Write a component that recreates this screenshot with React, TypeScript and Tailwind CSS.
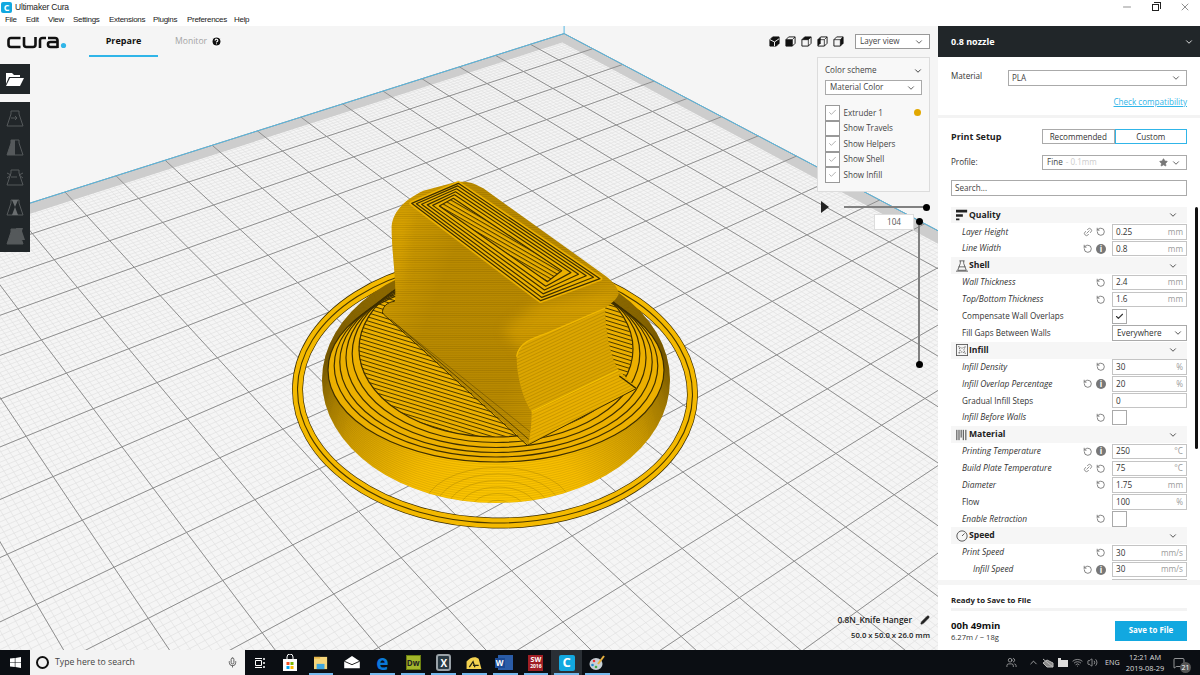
import React from "react";
import { ChevronDown, RotateCcw, Check, Star, Pencil, X, Minus, Mic, Link2, ChevronUp, Volume2, Wifi, MessageSquare, Users, HelpCircle } from "lucide-react";

const H = (a: number, b: number) => {
  const w = 1 - 0.022387 * a - 0.016922 * b;
  return [(15.37 * a - 42.69 * b + 564.1) / w, (14.01 * a + 9.951 * b + 33.6) / w];
};
const seg = (a0: number, b0: number, a1: number, b1: number) => {
  const p = H(a0, b0), q = H(a1, b1);
  return `M${p[0].toFixed(1)} ${p[1].toFixed(1)}L${q[0].toFixed(1)} ${q[1].toFixed(1)}`;
};
const bMax = (a: number) => (0.88 - 0.022387 * a) / 0.016922;
const aMax = (b: number) => (0.88 - 0.016922 * b) / 0.022387;

function gridPath(step: number) {
  let d = "";
  for (let i = 0; i * step < 38; i++) d += seg(i * step, 0, i * step, bMax(i * step));
  for (let i = 0; i * step < 50; i++) d += seg(0, i * step, aMax(i * step), i * step);
  return d;
}
const poly = (pts: number[][]) => pts.map((p) => p.map((n) => n.toFixed(1)).join(",")).join(" ");

const outer = [[505, 40], [930, 326], [752, 392], [365, 100]];
const inner = [[490, 85], [815, 302], [772, 335], [448, 108]];
const lerpRect = (t: number) => outer.map((p, i) => [p[0] + (inner[i][0] - p[0]) * t, p[1] + (inner[i][1] - p[1]) * t]);

const BODY =
  "M305 175C305 130 340 90 400 62L490 38C530 30 550 38 580 55L950 320C975 340 990 365 985 375C975 395 955 405 945 415C945 480 960 560 985 600L1040 655L715 825L280 430C275 410 295 395 315 395C320 330 305 250 305 175Z";
const GRIP = "M680 560C685 520 725 505 770 490L945 415C945 480 960 560 985 600L725 725C700 690 680 620 680 560Z";
const STRIP = "M725 725L985 600L1040 655L715 825C722 790 725 760 725 725Z";

function Scene() {
  const band = [H(0, 0), H(38, 0), H(38, 0.35), H(0.35, 0.35), H(0.35, 50), H(0, 50)];
  const wallEll = Array.from({ length: 18 }, (_, i) => i / 17);
  const rings = [0, 0.2, 0.38, 0.58, 0.78, 1];
  const ell = (t: number) => ({ cx: 496, cy: 370 - 21 * t, rx: 168 - 31 * t, ry: 92 - 4 * t });
  return (
    <svg className="absolute inset-0" width="938" height="624" viewBox="0 26 938 624">
      <defs>
        <radialGradient id="wall" gradientUnits="userSpaceOnUse" cx="496" cy="530" r="240">
          <stop offset="0" stopColor="#ffcb00" />
          <stop offset="0.4" stopColor="#f7bd00" />
          <stop offset="0.72" stopColor="#cf9c00" />
          <stop offset="1" stopColor="#936e00" />
        </radialGradient>
        <linearGradient id="body" x1="0" x2="1" y1="0.1" y2="0.5">
          <stop offset="0" stopColor="#d8a200" />
          <stop offset="0.3" stopColor="#b98a00" />
          <stop offset="0.65" stopColor="#b88900" />
          <stop offset="1" stopColor="#d09c00" />
        </linearGradient>
        <filter id="soft" x="-30%" y="-30%" width="160%" height="160%">
          <feGaussianBlur stdDeviation="18" />
        </filter>
        <pattern id="infill" patternUnits="userSpaceOnUse" width="40" height="3.9" patternTransform="rotate(17)">
          <rect width="40" height="3.9" fill="#ecb000" />
          <rect width="40" height="1" fill="#4a3900" />
        </pattern>
        <pattern id="infillK" patternUnits="userSpaceOnUse" width="60" height="11" patternTransform="rotate(30)">
          <rect width="60" height="11" fill="#ecb000" />
          <rect width="60" height="3.2" fill="#4a3900" />
        </pattern>
        <pattern id="lines" patternUnits="userSpaceOnUse" width="6" height="6.6">
          <rect width="6" height="1.8" fill="#000" opacity="0.12" />
        </pattern>
        <pattern id="linesB" patternUnits="userSpaceOnUse" width="6" height="9" patternTransform="rotate(-25)">
          <rect width="6" height="2" fill="#5a4400" opacity="0.32" />
        </pattern>
        <clipPath id="baseClip">
          <ellipse cx="496" cy="380" rx="174" ry="123" />
        </clipPath>
        <clipPath id="bodyClip">
          <path d={BODY} />
        </clipPath>
      </defs>
      <path d={gridPath(0.1)} stroke="#e1e1e1" strokeWidth="0.7" fill="none" />
      <polygon points={poly(band)} fill="#cdcdcd" />
      <path d={gridPath(1)} stroke="#8f8f8f" strokeWidth="1" fill="none" />
      <path d={seg(0, 0, 38, 0) + seg(0, 0, 0, 50) + "M564.1 26L564.1 33.6"} stroke="#56b8e2" strokeWidth="1" fill="none" />

      {/* brim */}
      <g fill="none" transform="rotate(1.2 495 392)">
        <ellipse cx="495" cy="392" rx="197.5" ry="131" stroke="#3e2f00" strokeWidth="11" />
        <ellipse cx="495" cy="392" rx="197.5" ry="131" stroke="#f4b900" strokeWidth="9.6" />
        <ellipse cx="495" cy="392" rx="197.5" ry="131" stroke="#4a3900" strokeWidth="1.1" />
      </g>

      {/* base */}
      <ellipse cx="496" cy="380" rx="174" ry="123" fill="url(#wall)" />
      <g clipPath="url(#baseClip)" fill="none" stroke="#4a3900" strokeOpacity="0.2" strokeWidth="0.6">
        {wallEll.map((t) => (
          <ellipse key={t} cx="496" cy={370 + 10 * t} rx={168 + 6 * t} ry={92 + 31 * t} />
        ))}
        {[14, 26, 38, 50, 62, 74].map((r) => (
          <ellipse key={r} cx="498" cy="508" rx={r} ry={r * 0.55} strokeOpacity="0.3" />
        ))}
      </g>
      <ellipse cx="496" cy="370" rx="168" ry="92" fill="#ecb000" />
      <ellipse cx="495.5" cy="349" rx="137" ry="88" fill="url(#infill)" />
      <g fill="none" stroke="#3e2f00" strokeWidth="1.2">
        {rings.map((t) => {
          const e = ell(t);
          return <ellipse key={t} cx={e.cx} cy={e.cy} rx={e.rx} ry={e.ry} />;
        })}
      </g>

      {/* knob */}
      <g transform="translate(290 170) scale(0.33333)">
        <path d={BODY} fill="url(#body)" />
        <g clipPath="url(#bodyClip)">
          <path d="M740 400L985 370L945 430L770 500L690 540L640 480Z" fill="#e2a900" opacity="0.55" filter="url(#soft)" />
          <path d="M300 170L360 110L340 300L310 390Z" fill="#e2aa00" opacity="0.5" filter="url(#soft)" />
        </g>
        <path d={BODY} fill="url(#lines)" />
        <polygon points={poly(outer)} fill="#ecb100" stroke="#ecb100" strokeWidth="14" strokeLinejoin="round" />
        <polygon points={poly(inner)} fill="url(#infillK)" />
        <g fill="none" stroke="#3e2f00" strokeWidth="3.6" strokeLinejoin="round">
          {[0, 0.17, 0.36, 0.56, 0.76, 1].map((t) => (
            <polygon key={t} points={poly(lerpRect(t))} />
          ))}
        </g>
        <path d={GRIP} fill="#dca600" />
        <path d={GRIP} fill="url(#linesB)" />
        <path d={STRIP} fill="#e9b000" />
        <path d={STRIP} fill="url(#linesB)" />
        <path d="M725 725L985 600" stroke="#f7c400" strokeWidth="3" fill="none" />
        <path d="M680 560C685 520 725 505 770 490L945 415" stroke="#f0b800" strokeWidth="4" fill="none" />
        <path d="M988 618L1038 655" stroke="#2c2200" strokeWidth="3.5" fill="none" />
        <g fill="none" stroke="#3e2f00" strokeWidth="3">
          <path d="M278 432C274 412 292 396 314 394" />
          <path d="M280 432L712 826L1040 655" />
          <path d="M302 448L716 808" strokeOpacity="0.75" />
          <path d="M325 468L720 785" strokeOpacity="0.4" />
        </g>
      </g>
    </svg>
  );
}

const Cube = ({ kind }: { kind: number }) => (
  <svg width="11" height="11" viewBox="0 0 12 12" className="shrink-0">
    <path d="M1 4L4 1H11V8L8 11H1Z" fill={kind === 0 ? "#111" : "none"} stroke="#111" strokeWidth="1" />
    {kind === 1 && <rect x="1" y="4" width="7" height="7" fill="#111" />}
    {kind === 2 && <path d="M1 4L4 1H11L8 4Z" fill="#111" />}
    {kind === 3 && <path d="M1 4L4 1V8L1 11Z" fill="#111" />}
    {kind === 4 && <path d="M8 4L11 1V8L8 11Z" fill="#111" />}
    {kind !== 0 && <path d="M1 4H8V11M8 4L11 1" fill="none" stroke="#111" strokeWidth="0.8" />}
    {kind === 0 && <path d="M1 4L6 6.5L11 3M6 6.5V11" stroke="#fff" strokeWidth="1" fill="none" />}
  </svg>
);

const Flask = ({ variant }: { variant: number }) => (
  <svg width="22" height="22" viewBox="0 0 22 22">
    {variant === 4 && <path d="M12 3H19L18 6L21 15H14Z" fill="#55595b" />}
    <path d="M7 4H15V7L19 19H3L7 7Z" fill={variant === 4 ? "#55595b" : "none"} stroke="#55595b" strokeWidth="1" />
    {variant === 1 && <path d="M7 4H11V19H3L7 7Z" fill="#55595b" />}
    {variant === 0 && <path d="M7 11H13M11 9L13 11L11 13" stroke="#55595b" fill="none" />}
    {variant === 2 && <path d="M3 7L7 9L3 12M19 7L15 9L19 12M7 11H13" stroke="#55595b" fill="none" />}
    {variant === 3 && <path d="M8 4L11 11L8 19H14L11 11L14 4Z" fill="#6a6e70" />}
  </svg>
);

const Revert = () => <RotateCcw size={9.5} strokeWidth={1.8} className="text-[#555]" />;
const InfoDot = () => (
  <span className="flex h-[10px] w-[10px] items-center justify-center rounded-full bg-[#777] text-[8px] font-bold leading-none text-white">i</span>
);
const LinkI = () => <Link2 size={10} strokeWidth={1.6} className="-rotate-45 text-[#666]" />;

type R =
  | { cat: string; icon: number }
  | { label: string; it?: boolean; ind?: boolean; i1?: string; i2?: string; val?: string; unit?: string; chk?: boolean; sel?: string; empty?: boolean };

const rows: R[] = [
  { cat: "Quality", icon: 0 },
  { label: "Layer Height", it: true, i1: "l", i2: "r", val: "0.25", unit: "mm" },
  { label: "Line Width", it: true, i1: "r", i2: "i", val: "0.8", unit: "mm" },
  { cat: "Shell", icon: 1 },
  { label: "Wall Thickness", it: true, i2: "r", val: "2.4", unit: "mm" },
  { label: "Top/Bottom Thickness", it: true, i2: "r", val: "1.6", unit: "mm" },
  { label: "Compensate Wall Overlaps", chk: true },
  { label: "Fill Gaps Between Walls", sel: "Everywhere" },
  { cat: "Infill", icon: 2 },
  { label: "Infill Density", it: true, i2: "r", val: "30", unit: "%" },
  { label: "Infill Overlap Percentage", it: true, i1: "r", i2: "i", val: "20", unit: "%" },
  { label: "Gradual Infill Steps", val: "0" },
  { label: "Infill Before Walls", it: true, i2: "r", empty: true },
  { cat: "Material", icon: 3 },
  { label: "Printing Temperature", it: true, i1: "r", i2: "i", val: "250", unit: "°C" },
  { label: "Build Plate Temperature", it: true, i1: "l", i2: "r", val: "75", unit: "°C" },
  { label: "Diameter", it: true, i2: "r", val: "1.75", unit: "mm" },
  { label: "Flow", val: "100", unit: "%" },
  { label: "Enable Retraction", it: true, i2: "r", empty: true },
  { cat: "Speed", icon: 4 },
  { label: "Print Speed", it: true, i2: "r", val: "30", unit: "mm/s" },
  { label: "Infill Speed", it: true, ind: true, i1: "r", i2: "i", val: "30", unit: "mm/s" },
  { label: "", val: "" },
];

const Ic = ({ k }: { k?: string }) => (
  <span className="flex w-[13px] items-center justify-center">
    {k === "r" && <Revert />}
    {k === "i" && <InfoDot />}
    {k === "l" && <LinkI />}
  </span>
);

const CatIcon = ({ i }: { i: number }) => (
  <svg width="12" height="12" viewBox="0 0 14 14" className="shrink-0">
    {i === 0 && <path d="M0 1H13V4H0ZM0 6H8V9H0ZM0 11H4V13H0Z" fill="#222" />}
    {i === 1 && <path d="M4 1H10M5 1V4L2 12H12L9 4V1M0 13H14M3 8H11" stroke="#444" fill="none" strokeWidth="0.9" />}
    {i === 2 && (
      <g>
        <rect x="0.5" y="0.5" width="13" height="13" fill="none" stroke="#555" />
        <path d="M3 3L7 5L11 3L9 7L11 11L7 9L3 11L5 7Z" fill="none" stroke="#555" strokeDasharray="1.5 1" />
      </g>
    )}
    {i === 3 && <path d="M1 1V13M3.5 1V13M6 1V10M8.5 1V13M11.5 1V13" stroke="#333" strokeWidth="1.1" fill="none" />}
    {i === 4 && (
      <g>
        <circle cx="7" cy="7" r="6" fill="none" stroke="#444" />
        <path d="M7 7L10 4" stroke="#444" />
      </g>
    )}
  </svg>
);

function SettingRow({ r }: { r: R }) {
  if ("cat" in r) {
    return (
      <div className="flex h-[16.9px] items-center bg-[#f6f6f6] pl-[3px] pr-[9px]">
        <span className="flex w-[15px] justify-center"><CatIcon i={r.icon} /></span>
        <span className="flex-1 text-[8.6px] font-bold text-[#222]">{r.cat}</span>
        <ChevronDown size={10} strokeWidth={2} className="text-[#333]" />
      </div>
    );
  }
  return (
    <div className="flex h-[16.9px] items-center">
      <span className={`flex-1 whitespace-nowrap text-[#333] ${r.it ? "text-[8.4px] italic" : "text-[8.1px]"} ${r.ind ? "pl-[22px]" : "pl-[11px]"}`}>{r.label}</span>
      <Ic k={r.i1} />
      <Ic k={r.i2} />
      <span className="ml-[4.5px] w-[75px]">
        {r.chk || r.empty ? (
          <span className="flex h-[15.5px] w-[15px] items-center justify-center border border-[#aaa] bg-white">
            {r.chk && <Check size={9} strokeWidth={3} className="text-[#333]" />}
          </span>
        ) : r.sel ? (
          <span className="flex h-[15.5px] items-center justify-between border border-[#aaa] bg-white pl-[4px] pr-[3px] text-[8.2px] text-[#333]">
            {r.sel}
            <ChevronDown size={10} strokeWidth={2} />
          </span>
        ) : (
          <span className="flex h-[15.5px] items-center justify-between border border-[#c4c4c4] bg-white pl-[3px] pr-[3px] text-[8.2px] text-[#333]">
            {r.val}
            <span className="text-[#9a9a9a]">{r.unit}</span>
          </span>
        )}
      </span>
    </div>
  );
}

const Boxed = ({ label, chk, dot }: { label: string; chk: boolean; dot?: boolean }) => (
  <div className="flex h-[15.5px] items-center">
    <span className="flex h-[15.5px] w-[15px] items-center justify-center border border-[#999] bg-white">
      {chk && <Check size={9} strokeWidth={2} className="text-[#999]" />}
    </span>
    <span className="ml-[3.5px] flex-1 text-[8.1px] text-[#444]">{label}</span>
    {dot && <span className="mr-[1px] h-[7px] w-[7px] rounded-full bg-[#e2a800]" />}
  </div>
);

function Tb({ n, on }: { n: number; on: boolean }) {
  return (
    <div className={`relative flex h-full w-[30.7px] items-center justify-center ${n === 9 ? "bg-[#2a2f35]" : ""}`}>
      {n === 0 && (
        <svg width="16" height="18" viewBox="0 0 16 18">
          <path d="M1 5H15V17H1Z" fill="#fff" />
          <path d="M5 5V3A3 3 0 0 1 11 3V5" stroke="#fff" fill="none" />
          <rect x="4.5" y="8" width="3" height="3" fill="#f25022" />
          <rect x="8.5" y="8" width="3" height="3" fill="#7fba00" />
          <rect x="4.5" y="12" width="3" height="3" fill="#00a4ef" />
          <rect x="8.5" y="12" width="3" height="3" fill="#ffb900" />
        </svg>
      )}
      {n === 1 && (
        <svg width="14" height="14" viewBox="0 0 16 16">
          <rect y="1" width="15" height="14" fill="#f6d67a" />
          <rect y="1" width="7" height="2" fill="#e8b64a" />
          <rect x="3" y="9" width="9" height="6" fill="#3ea7e0" />
        </svg>
      )}
      {n === 2 && (
        <svg width="16" height="13" viewBox="0 0 18 15">
          <path d="M0 6L9 0L18 6V14H0Z" fill="#fff" />
          <path d="M0 6L9 10L18 6" stroke="#000" fill="none" />
        </svg>
      )}
      {n === 3 && <span className="text-[21px] font-bold leading-none text-[#0a78d7]">e</span>}
      {n === 4 && <span className="flex h-[15px] w-[15px] items-center justify-center border border-[#6b7f10] bg-[#a4b62b] text-[8px] font-bold text-[#222]">Dw</span>}
      {n === 5 && (
        <span className="flex h-[17px] w-[15px] items-center justify-center rounded-[3px] border-2 border-[#9aa2a8] bg-[#2a3a44] text-[10px] font-bold leading-none text-white">X</span>
      )}
      {n === 6 && (
        <svg width="16" height="14" viewBox="0 0 16 15">
          <path d="M0 6C4 1 10 0 13 3L16 14H0Z" fill="#f3d250" />
          <path d="M3 12L7 6L9 12M7 10H13" stroke="#221" strokeWidth="1.3" fill="none" />
        </svg>
      )}
      {n === 7 && (
        <span className="relative flex h-[15px] w-[15px] items-center justify-end bg-[#2a5ca8]">
          <span className="absolute -left-[3px] flex h-[10px] w-[10px] items-center justify-center bg-[#1b4a94] text-[8px] font-bold leading-none text-white">W</span>
        </span>
      )}
      {n === 8 && (
        <span className="flex h-[16px] w-[15px] flex-col items-center justify-center bg-[#a01f25] text-[7px] font-bold leading-[7px] text-white">
          SW<span className="text-[5px] leading-[6px]">2016</span>
        </span>
      )}
      {n === 9 && (
        <span className="flex h-[16px] w-[16px] items-center justify-center rounded-[2px] bg-[#12a8e0] text-[13px] font-bold leading-none text-white">C</span>
      )}
      {n === 10 && (
        <svg width="16" height="16" viewBox="0 0 16 16">
          <ellipse cx="7" cy="9" rx="6.5" ry="6" fill="#c7cfd6" />
          <circle cx="5" cy="6" r="1.3" fill="#e33" />
          <circle cx="3.5" cy="10" r="1.3" fill="#28c" />
          <circle cx="7" cy="12" r="1.3" fill="#4a4" />
          <path d="M9 9L15 1" stroke="#e6b040" strokeWidth="2" />
        </svg>
      )}
      {on && <span className="absolute bottom-0 left-[3px] right-[3px] h-[2px] bg-[#76b9ed]" />}
    </div>
  );
}

export default function App() {
  return (
    <div className="flex h-[675px] w-[1200px] flex-col overflow-hidden bg-white font-['Open_Sans','Noto_Sans',sans-serif]">
      {/* title */}
      <div className="flex h-[14px] items-center">
        <span className="ml-[1px] flex h-[11px] w-[11px] items-center justify-center rounded-[2px] bg-[#12a8e0] text-[9px] font-bold leading-none text-white">C</span>
        <span className="ml-[3px] flex-1 font-['Liberation_Sans',sans-serif] text-[8.5px] leading-none tracking-[-0.2px] text-[#222]">Ultimaker Cura</span>
        <span className="flex w-[29px] justify-center"><Minus size={12} strokeWidth={1} className="text-[#222]" /></span>
        <span className="flex w-[29px] justify-center">
          <span className="relative block h-[7px] w-[7px] border border-[#222]">
            <span className="absolute -right-[3px] -top-[3px] h-[7px] w-[7px] border-r border-t border-[#222]" />
          </span>
        </span>
        <span className="mr-[1px] flex w-[29px] justify-center"><X size={12} strokeWidth={1} className="text-[#222]" /></span>
      </div>
      {/* menu */}
      <div className="flex h-[12px] items-center pl-[5px] font-['Liberation_Sans',sans-serif] text-[8px] leading-none tracking-[-0.3px] text-[#222]">
        <span className="w-[21px]">File</span>
        <span className="w-[22px]">Edit</span>
        <span className="w-[25px]">View</span>
        <span className="w-[36px]">Settings</span>
        <span className="w-[44px]">Extensions</span>
        <span className="w-[34px]">Plugins</span>
        <span className="w-[47px]">Preferences</span>
        <span>Help</span>
      </div>
      {/* main */}
      <div className="flex h-[624px]">
        <div className="relative w-[938px] overflow-hidden bg-[#f5f5f5]">
          <Scene />
          {/* top bar */}
          <div className="relative flex h-[31px] items-start">
            <svg width="60" height="13" viewBox="0 0 60 13" className="ml-[7px] mt-[9.5px]">
              <g fill="none" stroke="#111" strokeWidth="2.6">
                <path d="M13.5 2H4Q1.5 2 1.5 4.5V8.5Q1.5 11 4 11H13.5" />
                <path d="M17 1V8.5Q17 11 19.5 11H26Q28.5 11 28.5 8.5V1" />
                <path d="M33 12V4.5Q33 2 35.5 2H39" />
                <path d="M41 2H48Q50.5 2 50.5 4.5V12M50.5 11H43.5Q41 11 41 8.5V8Q41 6 43.5 6H50.5" />
              </g>
              <circle cx="56.5" cy="9.5" r="2.6" fill="#30b5e8" />
            </svg>
            <div className="ml-[22px] flex h-[31px] w-[69px] items-center justify-center border-b-2 border-[#30b5e8] text-[9px] font-bold text-[#111]">Prepare</div>
            <div className="ml-[17px] flex h-[31px] items-center gap-[4px] text-[8.6px] text-[#a4a4a4]">
              Monitor
              <HelpCircle size={11} strokeWidth={2.5} fill="#111" className="text-white" />
            </div>
            <div className="ml-auto mr-[8px] mt-[8px] flex items-center">
              <div className="mr-[11px] flex gap-[5px]">
                {[0, 1, 2, 3, 4].map((k) => <Cube key={k} kind={k} />)}
              </div>
              <div className="flex h-[15px] w-[75px] items-center justify-between border border-[#999] bg-white pl-[4px] pr-[5px] text-[8.1px] text-[#444]">
                Layer view
                <ChevronDown size={10} strokeWidth={2} />
              </div>
            </div>
          </div>
          {/* left toolbar */}
          <div className="relative mt-[7px] flex w-[30px] flex-col">
            <div className="flex h-[30px] items-center justify-center bg-[#212629]">
              <svg width="18" height="14" viewBox="0 0 18 14">
                <path d="M0 1H6L8 3H14V5H3L0 12Z" fill="#fff" />
                <path d="M4 6H18L14 14H0Z" fill="#fff" />
              </svg>
            </div>
            <div className="mt-[8px] flex h-[150px] flex-col items-center justify-around bg-[#212629] py-[1px]">
              {[0, 1, 2, 3, 4].map((k) => <Flask key={k} variant={k} />)}
            </div>
          </div>
          {/* layer panel */}
          <div className="absolute left-[817px] top-[31px] h-[135px] w-[113px] border border-[#dcdcdc] bg-[#f8f8f8] px-[7px] pt-[7px]">
            <div className="flex h-[11px] items-center justify-between text-[8.1px] text-[#444]">
              Color scheme
              <ChevronDown size={10} strokeWidth={2} className="-mr-[1px] text-[#222]" />
            </div>
            <div className="mt-[4px] flex h-[15px] items-center justify-between border border-[#aaa] bg-white pl-[4px] pr-[5px] text-[8.1px] text-[#444]">
              Material Color
              <ChevronDown size={10} strokeWidth={2} />
            </div>
            <div className="mt-[10px]">
              <Boxed label="Extruder 1" chk dot />
              <Boxed label="Show Travels" chk={false} />
              <Boxed label="Show Helpers" chk />
              <Boxed label="Show Shell" chk />
              <Boxed label="Show Infill" chk />
            </div>
          </div>
          {/* slider */}
          <div className="absolute left-[821px] top-[175px] h-0 w-0 border-y-[6px] border-l-[8px] border-y-transparent border-l-[#222]" />
          <div className="absolute left-[844px] top-[180px] h-[2px] w-[82px] bg-[#808080]" />
          <div className="absolute left-[922.5px] top-[177.5px] h-[7px] w-[7px] rounded-full bg-black" />
          <div className="absolute left-[918px] top-[196px] h-[142px] w-[2px] bg-[#808080]" />
          <div className="absolute left-[915.5px] top-[192px] h-[7px] w-[7px] rounded-full bg-black" />
          <div className="absolute left-[915.5px] top-[334.5px] h-[7px] w-[7px] rounded-full bg-black" />
          <div className="absolute left-[874px] top-[188px] flex h-[16px] w-[40px] items-center justify-center border border-[#ddd] bg-white text-[8.2px] text-[#555]">104</div>
          {/* object info */}
          <div className="absolute bottom-[8px] right-[8px] flex flex-col items-end">
            <div className="flex items-center font-semibold text-[#222]">
              <span className="text-[8.4px]">0.8N_Knife Hanger</span>
              <Pencil size={10} fill="#222" strokeWidth={1.5} className="ml-[8px]" />
            </div>
            <div className="mt-[4px] text-[7.7px] font-semibold text-[#222]">50.0 x 50.0 x 26.0 mm</div>
          </div>
        </div>

        {/* right panel */}
        <div className="relative flex w-[262px] flex-col bg-white">
          <div className="flex h-[31px] items-center justify-between bg-[#212629] pl-[13px] pr-[6px] text-[9px] font-bold text-white">
            0.8 nozzle
            <ChevronDown size={10} strokeWidth={2} />
          </div>
          <div className="h-[58px] pl-[13px] pr-[13px] pt-[13px]">
            <div className="flex h-[15.5px] items-center">
              <span className="-mt-[3px] w-[57px] text-[8.1px] text-[#333]">Material</span>
              <div className="flex h-[15.5px] flex-1 items-center justify-between border border-[#aaa] pl-[3px] pr-[5px] text-[8.1px] text-[#444]">
                PLA
                <ChevronDown size={10} strokeWidth={2} />
              </div>
            </div>
            <div className="mt-[10px] text-right text-[8.1px] text-[#30b5e8] underline">Check compatibility</div>
          </div>
          <div className="h-[3px] bg-[#f3f3f3]" />
          <div className="pl-[13px] pr-[13px] pt-[11.5px]">
            <div className="flex h-[14.5px] items-center">
              <span className="w-[91px] text-[9px] font-bold text-[#222]">Print Setup</span>
              <div className="flex h-[15px] flex-1 text-[8.1px] text-[#333]">
                <span className="flex flex-1 items-center justify-center border border-[#aaa]">Recommended</span>
                <span className="flex flex-1 items-center justify-center border border-[#30b5e8]">Custom</span>
              </div>
            </div>
            <div className="mt-[11px] flex h-[15px] items-center">
              <span className="w-[91px] text-[8.1px] text-[#333]">Profile:</span>
              <div className="flex h-[15px] flex-1 items-center border border-[#aaa] pl-[4px] pr-[5px] text-[8.1px] text-[#444]">
                Fine <span className="ml-[3px] flex-1 text-[#ccc]">- 0.1mm</span>
                <Star size={9} fill="#777" className="mr-[3px] text-[#777]" />
                <ChevronDown size={10} strokeWidth={2} />
              </div>
            </div>
            <div className="mt-[10px] flex h-[15.5px] items-center border border-[#aaa] pl-[3px] text-[8.1px] text-[#444]">Search...</div>
          </div>
          <div className="relative mt-[11px] flex-1 overflow-hidden pl-[13px] pr-[13px]">
            {rows.map((r, i) => <SettingRow key={i} r={r} />)}
            <div className="absolute right-[2px] top-0 h-[242px] w-[3.5px] rounded-full bg-[#111]" />
          </div>
          <div className="h-[70px] border-t-[5px] border-[#f5f5f5] pl-[13px] pr-[13px] pt-[10px]">
            <div className="text-[7.8px] font-bold leading-[10px] text-[#222]">Ready to Save to File</div>
            <div className="mt-[3px] h-[2.5px] bg-[#f3f3f3]" />
            <div className="mt-[8px] flex items-center justify-between">
              <div>
                <div className="text-[9.6px] font-bold leading-[13px] text-[#111]">00h 49min</div>
                <div className="text-[7.6px] leading-[11px] text-[#333]">6.27m / ~ 18g</div>
              </div>
              <div className="flex h-[20px] w-[72px] items-center justify-center bg-[#12a8e0] text-[7.9px] font-bold text-white">Save to File</div>
            </div>
          </div>
        </div>
      </div>

      {/* taskbar */}
      <div className="flex h-[25px] items-center bg-[#0b0e13] text-white">
        <div className="flex w-[30px] justify-center">
          <svg width="11" height="11" viewBox="0 0 11 11"><path d="M0 1.5L4.8 1V5.2H0ZM5.4 0.9L11 0V5.2H5.4ZM0 5.8H4.8V10L0 9.5ZM5.4 5.8H11V11L5.4 10.1Z" fill="#fff" /></svg>
        </div>
        <div className="flex h-full w-[215px] items-center bg-[#f3f3f3] text-[8.7px] text-[#444]">
          <span className="ml-[6px] h-[13px] w-[13px] rounded-full border-2 border-[#111]" />
          <span className="ml-[6px] flex-1">Type here to search</span>
          <Mic size={11} className="mr-[7px] text-[#555]" />
        </div>
        <div className="flex w-[30px] justify-center">
          <svg width="11" height="12" viewBox="0 0 11 12" fill="none" stroke="#fff"><path d="M0 1.5H7M0 10.5H7M.5 3.5H6.5V8.5H.5Z" /><path d="M9 1V3M9 5V7M9 9V11" strokeWidth="1.5" /></svg>
        </div>
        <div className="flex h-full">
          {[0, 1, 2, 3, 4, 5, 6, 7, 8, 9, 10].map((n) => <Tb key={n} n={n} on={n !== 0 && n !== 2} />)}
        </div>
        <div className="ml-auto flex h-full items-center text-[#ddd]">
          <Users size={11} strokeWidth={1.3} />
          <ChevronUp size={11} strokeWidth={1.5} className="ml-[11px]" />
          <span className="ml-[1px] flex w-[15px] justify-center"><svg width="12" height="10" viewBox="0 0 12 10"><path d="M1 1L11 9M1 5L5 2L11 5V9H5Z" stroke="#bbb" fill="#888" /></svg></span>
          <span className="flex w-[15px] justify-center"><svg width="12" height="9" viewBox="0 0 12 9"><rect x="1" y="2" width="10" height="7" fill="#ddd" /><rect x="1" y="0" width="3" height="2" fill="#ddd" /></svg></span>
          <span className="flex w-[15px] justify-center"><Wifi size={11} strokeWidth={1.3} /></span>
          <span className="flex w-[15px] justify-center"><Volume2 size={11} strokeWidth={1.3} /></span>
          <span className="ml-[5px] w-[14px] whitespace-nowrap text-[7.2px]">ENG</span>
          <div className="ml-[5px] flex w-[42px] flex-col items-center whitespace-nowrap text-[7.4px] leading-[11px]">
            <span>12:21 AM</span>
            <span>2019-08-29</span>
          </div>
          <span className="relative ml-[7px] mr-[15px]">
            <MessageSquare size={12} strokeWidth={1.3} />
            <span className="absolute -bottom-[4px] -right-[6px] flex h-[11px] w-[11px] items-center justify-center rounded-full bg-[#555] text-[7px] leading-none text-white">21</span>
          </span>
        </div>
      </div>
    </div>
  );
}
